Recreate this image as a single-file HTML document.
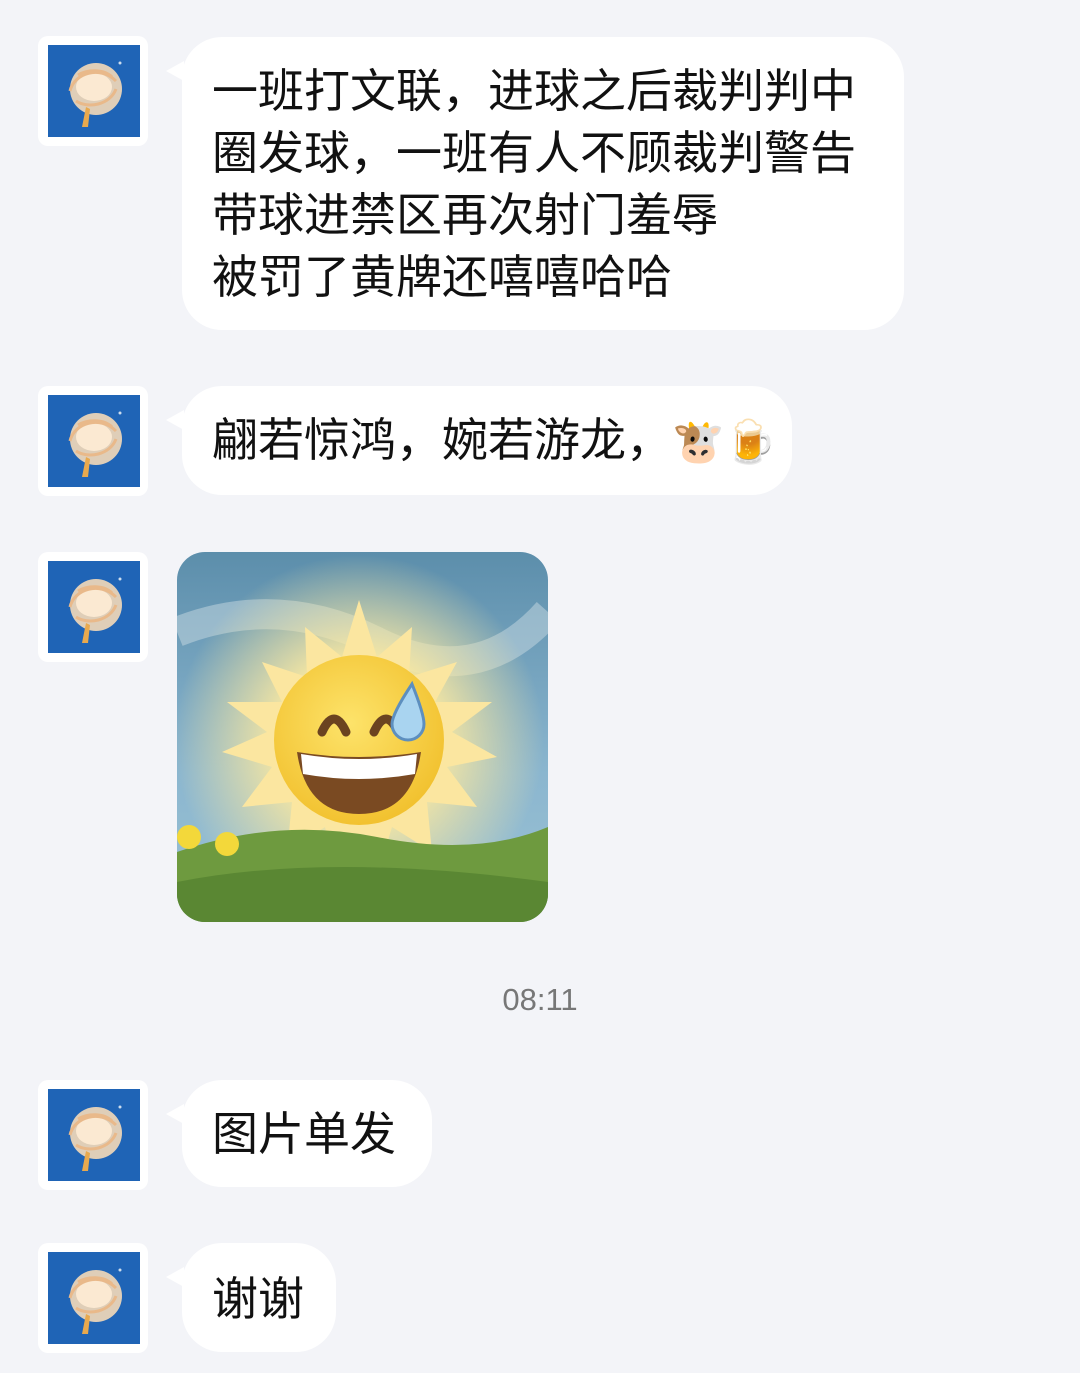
<!DOCTYPE html>
<html><head><meta charset="utf-8"><style>
body{margin:0;width:1080px;height:1373px;background:#f3f4f8;position:relative;overflow:hidden;font-family:"Liberation Sans","Noto Sans CJK SC",sans-serif;color:#111;}
.av{position:absolute;left:38px;width:110px;height:110px;background:#fff;border-radius:10px;}
.av .in{position:absolute;left:10px;top:9px;width:92px;height:92px;background:#1f64b6;overflow:hidden}
.b{position:absolute;left:182px;background:#fff;border-radius:40px;font-size:46px;line-height:62px;padding:0 30px;box-sizing:border-box;white-space:nowrap}
.b:before{content:"";position:absolute;left:-16px;top:24px;border-right:18px solid #fff;border-top:10px solid transparent;border-bottom:10px solid transparent}
.t{position:absolute;left:0;width:1080px;text-align:center;top:982px;font-size:31px;color:#777}
</style></head><body>
<svg width="0" height="0" style="position:absolute"><defs><g id="swirl"><circle cx="48" cy="44" r="26" fill="#f4d9b8" opacity=".9"/><ellipse cx="46" cy="42" rx="18" ry="14" fill="#fbe9d2"/><path d="M22 46c4-18 30-26 46-10M28 56c12 8 34 4 40-12M30 30c10-6 26-6 34 2" stroke="#e9b98a" stroke-width="3" fill="none"/><path d="M38 62l-4 20h6l2-18z" fill="#e8a94e"/><circle cx="72" cy="18" r="1.5" fill="#cde"/></g></defs></svg>
<div class="av" style="top:36px"><div class="in"><svg width="92" height="92"><use href="#swirl"/></svg></div></div>
<div class="av" style="top:386px"><div class="in"><svg width="92" height="92"><use href="#swirl"/></svg></div></div>
<div class="av" style="top:552px"><div class="in"><svg width="92" height="92"><use href="#swirl"/></svg></div></div>
<div class="av" style="top:1080px"><div class="in"><svg width="92" height="92"><use href="#swirl"/></svg></div></div>
<div class="av" style="top:1243px"><div class="in"><svg width="92" height="92"><use href="#swirl"/></svg></div></div>

<div class="b" style="top:37px;width:722px;height:293px;padding-top:23px">一班打文联，进球之后裁判判中<br>圈发球，一班有人不顾裁判警告<br>带球进禁区再次射门羞辱<br>被罚了黄牌还嘻嘻哈哈</div>
<div class="b" style="top:386px;width:610px;height:109px;padding-top:23px">翩若惊鸿，婉若游龙，<span style="font-size:42px">🐮🍺</span></div>

<svg style="position:absolute;left:177px;top:552px;border-radius:28px" width="371" height="370" viewBox="0 0 371 370">
<defs><linearGradient id="sky" x1="0" y1="0" x2="0" y2="1"><stop offset="0" stop-color="#5c8eab"/><stop offset=".6" stop-color="#8bb6cf"/><stop offset="1" stop-color="#9cc3d4"/></linearGradient>
<radialGradient id="glow" cx=".5" cy=".5" r=".5"><stop offset=".4" stop-color="#fbe9a0"/><stop offset="1" stop-color="#fbe9a0" stop-opacity="0"/></radialGradient>
<radialGradient id="face" cx=".45" cy=".4" r=".6"><stop offset="0" stop-color="#fde36a"/><stop offset="1" stop-color="#f2c230"/></radialGradient></defs>
<rect width="371" height="370" fill="url(#sky)"/>
<path d="M0 80 Q100 40 200 90 T371 60" stroke="#c7d9e2" stroke-width="30" fill="none" opacity=".5"/>
<circle cx="182" cy="188" r="185" fill="url(#glow)"/>
<polygon fill="#fbe6a0" points="182,48 200,105 235,75 232,125 280,110 258,150 315,150 275,180 320,205 270,215 300,255 250,250 255,300 215,275 200,325 180,285 160,325 148,275 110,300 115,250 65,255 95,215 45,200 90,180 50,150 105,150 85,110 130,125 128,75 165,105"/>
<circle cx="182" cy="188" r="85" fill="url(#face)"/>
<path d="M120 200 Q182 210 244 200 Q235 262 182 262 Q129 262 120 200Z" fill="#7a4a22"/>
<path d="M124 202 Q182 212 240 202 L238 222 Q182 232 126 222Z" fill="#fff"/>
<path d="M145 180 q12-26 24 0" stroke="#6b4320" stroke-width="9" fill="none" stroke-linecap="round"/>
<path d="M197 180 q12-26 24 0" stroke="#6b4320" stroke-width="9" fill="none" stroke-linecap="round"/>
<path d="M235 132 q-20 30 -20 40 a16 16 0 0 0 32 0 q0 -10 -12 -40z" fill="#a9d4f0" stroke="#5d8fbf" stroke-width="3"/>
<path d="M0 300 Q100 265 200 285 T371 275 V370 H0Z" fill="#6e9a3f"/>
<path d="M0 330 Q150 300 371 330 V370 H0Z" fill="#5a8733"/>
<circle cx="12" cy="285" r="12" fill="#f3d83a"/><circle cx="50" cy="292" r="12" fill="#f3d83a"/>
</svg>

<div class="t">08:11</div>
<div class="b" style="top:1080px;width:250px;height:107px;padding-top:23px">图片单发</div>
<div class="b" style="top:1243px;width:154px;height:109px;padding-top:25px">谢谢</div>
</body></html>
